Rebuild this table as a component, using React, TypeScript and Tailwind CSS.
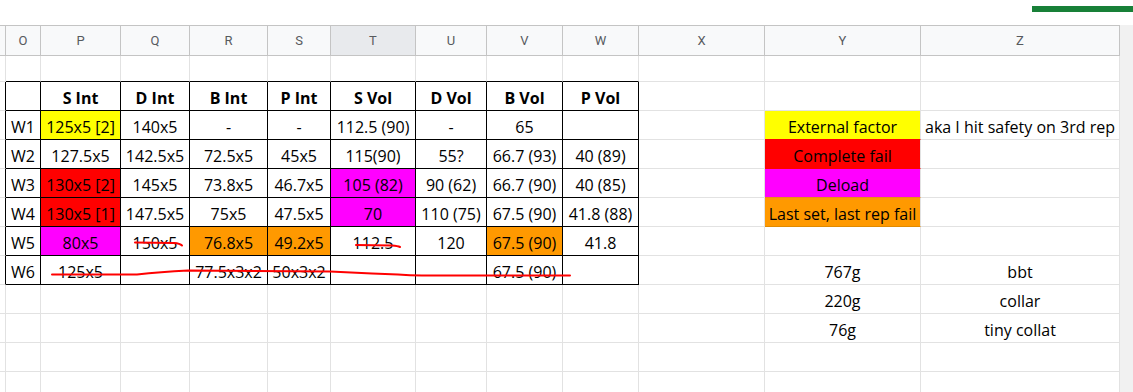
import React from "react";

type Cell = { t?: string; bg?: string; bold?: boolean; br?: string; bb?: string };

const GRID =
  "grid grid-cols-[6px_35px_80px_69px_78px_63px_85px_71px_76px_76px_126px_156px_199px_13px]";

const YEL = "bg-[#ffff00]";
const RED = "bg-[#ff0000]";
const MAG = "bg-[#ff00ff]";
const ORA = "bg-[#ff9900]";

const letters = ["", "O", "P", "Q", "R", "S", "T", "U", "V", "W", "X", "Y", "Z", ""];

type TV = [string, string?];
const table: TV[][] = [
  [[""], ["S Int"], ["D Int"], ["B Int"], ["P Int"], ["S Vol"], ["D Vol"], ["B Vol"], ["P Vol"]],
  [["W1"], ["125x5 [2]", YEL], ["140x5"], ["-"], ["-"], ["112.5 (90)"], ["-"], ["65"], [""]],
  [["W2"], ["127.5x5"], ["142.5x5"], ["72.5x5"], ["45x5"], ["115(90)"], ["55?"], ["66.7 (93)"], ["40 (89)"]],
  [["W3"], ["130x5 [2]", RED], ["145x5"], ["73.8x5"], ["46.7x5"], ["105 (82)", MAG], ["90 (62)"], ["66.7 (90)"], ["40 (85)"]],
  [["W4"], ["130x5 [1]", RED], ["147.5x5"], ["75x5"], ["47.5x5"], ["70", MAG], ["110 (75)"], ["67.5 (90)"], ["41.8 (88)"]],
  [["W5"], ["80x5", MAG], ["150x5"], ["76.8x5", ORA], ["49.2x5", ORA], ["112.5"], ["120"], ["67.5 (90)", ORA], ["41.8"]],
  [["W6"], ["125x5"], [""], ["77.5x3x2"], ["50x3x2"], [""], [""], ["67.5 (90)"], [""]],
];

const side: Record<number, { y?: string; ybg?: string; ybb?: string; z?: string }> = {
  2: { y: "External factor", ybg: YEL, ybb: "border-b-[#ff0000]", z: "aka I hit safety on 3rd rep" },
  3: { y: "Complete fail", ybg: RED, ybb: "border-b-[#ff0000]" },
  4: { y: "Deload", ybg: MAG, ybb: "border-b-[#e88a1a]" },
  5: { y: "Last set, last rep fail", ybg: ORA, ybb: "border-b-[#e08a00]" },
  7: { y: "767g", z: "bbt" },
  8: { y: "220g", z: "collar" },
  9: { y: "76g", z: "tiny collat" },
};

function buildRows(): Cell[][] {
  const rows: Cell[][] = [];
  for (let r = 0; r < 12; r++) {
    const row: Cell[] = [];
    const inTable = r >= 1 && r <= 7;
    row.push({ br: inTable ? "border-r-black" : "border-r-[#e2e2e2]", bb: "border-b-[#e2e2e2]" });
    for (let c = 1; c <= 9; c++) {
      if (inTable) {
        const v = table[r - 1][c - 1];
        row.push({ t: v[0], bg: v[1], bold: r === 1, br: "border-r-black", bb: "border-b-black" });
      } else if (r === 0) {
        row.push({ br: "border-r-[#e2e2e2]", bb: "border-b-black" });
      } else {
        row.push({ br: "border-r-[#e2e2e2]", bb: "border-b-[#e2e2e2]" });
      }
    }
    const s = side[r] || {};
    row.push({ br: "border-r-[#e2e2e2]", bb: "border-b-[#e2e2e2]" });
    row.push({ t: s.y, bg: s.ybg, br: "border-r-[#e2e2e2]", bb: s.ybb || "border-b-[#e2e2e2]" });
    row.push({ t: s.z, br: "border-r-[#e2e2e2]", bb: "border-b-[#e2e2e2]" });
    row.push({ bg: "bg-[#f1f1f1]", br: "border-r-[#f1f1f1]", bb: "border-b-[#f1f1f1]" });
    rows.push(row);
  }
  return rows;
}

export default function App() {
  const rows = buildRows();
  return (
    <div className="relative w-[1133px] h-[392px] overflow-hidden bg-white font-['Open_Sans',sans-serif] text-black">
      <div className="h-[25px] flex justify-end pt-[6px]">
        <div className="w-[101px] h-[6px] bg-[#188038]" />
      </div>
      <div className={GRID}>
        {letters.map((l, i) => (
          <div
            key={i}
            className={
              "h-[31px] border-t border-b border-r flex items-center justify-center font-['Roboto',sans-serif] text-[13px] text-[#575a5e] " +
              (i === 13
                ? "bg-[#f1f1f1] border-t-[#f1f1f1] border-b-[#f1f1f1] border-r-[#f1f1f1]"
                : (i === 6 ? "bg-[#e8eaed] " : "bg-[#f8f9fa] ") +
                  "border-t-[#c4c4c4] border-b-[#c4c4c4] border-r-[#c4c4c4]")
            }
          >
            {l}
          </div>
        ))}
      </div>
      {rows.map((row, r) => (
        <div key={r} className={GRID}>
          {row.map((c, ci) => (
            <div
              key={ci}
              className={
                (r === 0 ? "h-[26px] " : "h-[29px] ") +
                "border-r border-b flex items-end justify-center pb-[2px] leading-[20px] text-[16px] whitespace-nowrap " +
                (c.bg || "bg-white") +
                " " +
                (c.br || "") +
                " " +
                (c.bb || "") +
                (c.bold ? " font-bold" : "")
              }
            >
              {c.t}
            </div>
          ))}
        </div>
      ))}
      <svg
        className="absolute inset-0 pointer-events-none"
        width={1133}
        height={392}
        viewBox="0 0 1133 392"
      >
        <g fill="none" stroke="#ff0000" strokeWidth={2} strokeLinecap="round" strokeLinejoin="round">
          <path d="M135 242.5 L174 243 Q180 243.5 182 245.5" />
          <path d="M356 245 L392 245.5 Q398 246 400 247" />
          <path d="M52 274.5 L137 274.5 Q160 272 188 270.5 L330 271.5 Q352 272.5 372 273.5 L398 274.5 Q410 275.5 422 275.5 L570 275.5" />
        </g>
      </svg>
    </div>
  );
}
